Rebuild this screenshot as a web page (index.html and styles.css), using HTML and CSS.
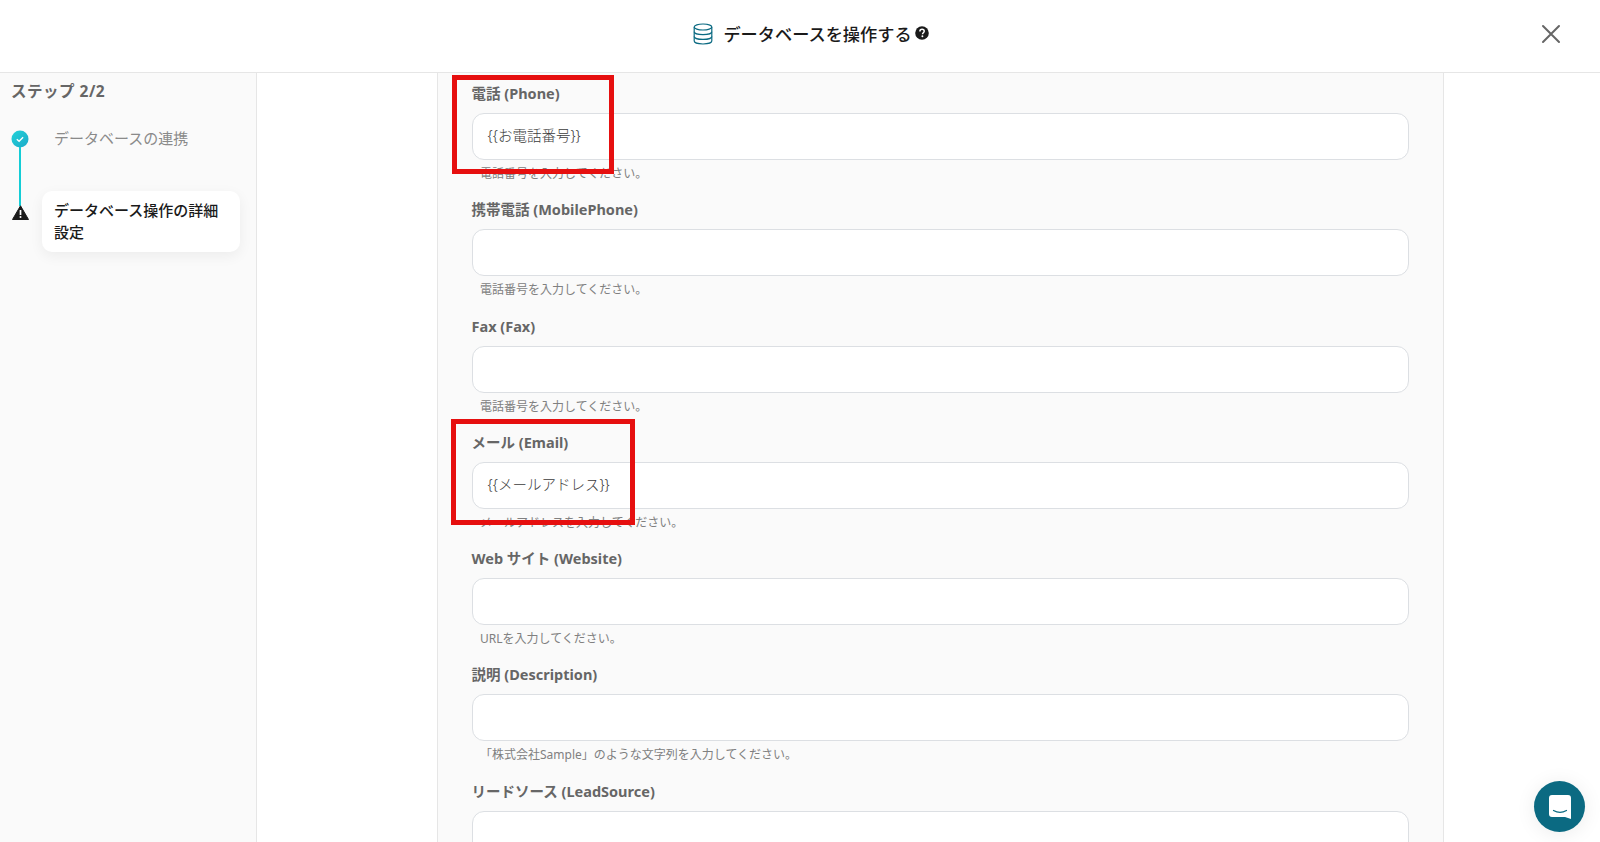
FILE: index.html
```html
<!DOCTYPE html>
<html lang="ja">
<head>
<meta charset="utf-8">
<title>データベースを操作する</title>
<link rel="stylesheet" href="styles.css">
</head>
<body>
<header class="top">
  <div class="title">
    <svg class="db" width="20" height="22" viewBox="0 0 20 22" fill="none" stroke="#0b6a82" stroke-width="1.2"><ellipse cx="10" cy="4" rx="8.8" ry="3"/><path d="M1.2 4v14c0 1.7 3.9 3 8.8 3s8.8-1.3 8.8-3V4"/><path d="M1.2 8.700c0 1.700 3.900 3 8.800 3s8.800-1.300 8.800-3"/><path d="M1.200 13.400c0 1.700 3.900 3 8.800 3s8.800-1.300 8.800-3"/></svg>
    <span class="title-text">データベースを操作する</span>
    <svg class="help" width="14" height="14" viewBox="0 0 14 14"><circle cx="7" cy="7" r="6.800" fill="#1a1a1a"/><path d="M4.900 5.400c0-1.300 1-2.100 2.200-2.100s2.100.8 2.100 1.900c0 1.600-1.700 1.500-1.700 3" fill="none" stroke="#fff" stroke-width="1.500"/><circle cx="7.400" cy="10.300" r=".95" fill="#fff"/></svg>
  </div>
  <svg class="close" width="20" height="20" viewBox="0 0 20 20" stroke="#666" stroke-width="2" stroke-linecap="round"><path d="M2 2l16 16M18 2L2 18"/></svg>
</header>
<div class="body">
  <aside class="side">
    <div class="step-title">ステップ 2/2</div>
    <div class="steps">
      <div class="rail">
        <svg width="18" height="18" viewBox="0 0 18 18"><defs><linearGradient id="g" x1="0" y1="0" x2="1" y2="1"><stop offset="0" stop-color="#22d3d8"/><stop offset="1" stop-color="#1ca9c9"/></linearGradient></defs><circle cx="9" cy="9" r="8.500" fill="url(#g)"/><path d="M5.800 9.200l2.300 2.100 4-4" fill="none" stroke="#fff" stroke-width="1.300"/></svg>
        <span class="line"></span>
        <svg width="17" height="15" viewBox="0 0 17 15"><path d="M8.500.8L16.500 14.500H.5z" fill="#1a1a1a" stroke="#1a1a1a" stroke-linejoin="round"/><path d="M8.500 5v5" stroke="#fff" stroke-width="1.700"/><circle cx="8.500" cy="12" r="1" fill="#fff"/></svg>
      </div>
      <div class="labels">
        <div class="step-done">データベースの連携</div>
        <div class="step-now">データベース操作の詳細設定</div>
      </div>
    </div>
  </aside>
  <main class="main">
    <div class="panel">
      <div class="field">
        <div class="label">電話 (Phone)</div>
        <div class="input">{{お電話番号}}</div>
        <div class="hint">電話番号を入力してください。</div>
        <span class="mark mark-phone"></span>
      </div>
      <div class="field">
        <div class="label">携帯電話 (MobilePhone)</div>
        <div class="input"></div>
        <div class="hint">電話番号を入力してください。</div>
      </div>
      <div class="field">
        <div class="label">Fax (Fax)</div>
        <div class="input"></div>
        <div class="hint">電話番号を入力してください。</div>
      </div>
      <div class="field">
        <div class="label">メール (Email)</div>
        <div class="input">{{メールアドレス}}</div>
        <div class="hint">メールアドレスを入力してください。</div>
        <span class="mark mark-mail"></span>
      </div>
      <div class="field">
        <div class="label">Web サイト (Website)</div>
        <div class="input"></div>
        <div class="hint">URLを入力してください。</div>
      </div>
      <div class="field">
        <div class="label">説明 (Description)</div>
        <div class="input"></div>
        <div class="hint">「株式会社Sample」のような文字列を入力してください。</div>
      </div>
      <div class="field">
        <div class="label">リードソース (LeadSource)</div>
        <div class="input"></div>
      </div>
    </div>
  </main>
</div>
<div class="chat">
  <svg width="24" height="26" viewBox="0 0 24 26"><path d="M4 1h16a3 3 0 0 1 3 3v21l-6-2H4a3 3 0 0 1-3-3V4a3 3 0 0 1 3-3z" fill="#fff"/><path d="M5.500 16.500c4 2.200 9 2.200 13 0" fill="none" stroke="#0b6a82" stroke-width="1.200" stroke-linecap="round"/></svg>
</div>
</body>
</html>
```

FILE: styles.css
```css
* { box-sizing: border-box; }
html, body { margin: 0; height: 100%; overflow: hidden; }
body {
  font-family: "Noto Sans", "Noto Sans CJK JP", sans-serif;
  background: #fff;
  color: #1a1a1a;
  display: flex;
  flex-direction: column;
}
.top {
  height: 73px;
  flex: none;
  border-bottom: 1px solid #e6e6e6;
  display: flex;
  align-items: center;
  justify-content: center;
  position: relative;
  background: #fff;
}
.title { display: flex; align-items: center; margin-top: -5px; margin-left: 22px; }
.db { margin-right: 10px; }
.title-text { font-size: 17.200px; font-weight: 500; color: #1a1a1a; margin-right: 3px; }
.help { margin-top: -2px; }
.close { position: absolute; left: 1541px; top: 24px; }
.body { flex: 1; display: flex; min-height: 0; }
.side {
  width: 257px;
  flex: none;
  background: #fafafa;
  border-right: 1px solid #e6e6e6;
  padding: 7px 12px 0;
}
.step-title { font-size: 15.500px; font-weight: 700; color: #666; line-height: 22px; letter-spacing: .5px; margin-left: -1px; }
.steps { display: flex; margin-top: 25px; }
.rail { width: 18px; flex: none; margin-left: -1px; display: flex; flex-direction: column; align-items: center; padding-top: 3px; }
.rail svg { flex: none; display: block; }
.line { width: 2px; height: 59px; background: #14cdd6; margin-top: -1px; }
.rail svg:last-child { margin-top: -1px; }
.labels { margin-left: 13px; }
.step-done { font-size: 15px; line-height: 22px; color: #8a8a8a; padding-left: 12px; height: 64px; }
.step-now {
  width: 198px;
  background: #fff;
  border-radius: 10px;
  box-shadow: 0 4px 14px rgba(0, 0, 0, .06);
  font-size: 15px;
  font-weight: 500;
  line-height: 22px;
  color: #1a1a1a;
  padding: 8px 12px 9px;
}
.main { flex: 1; min-width: 0; overflow: hidden; padding-left: 180px; }
.panel {
  width: 1007px;
  height: 100%;
  background: #fafafa;
  border-left: 1px solid #e6e6e6;
  border-right: 1px solid #e6e6e6;
  padding: 10px 34px 0 33.500px;
  overflow: hidden;
}
.field { position: relative; height: 116.300px; }
.label { font-size: 14.500px; font-weight: 700; color: #666; line-height: 20px; }
.input {
  height: 47px;
  margin-top: 10px;
  background: #fff;
  border: 1px solid #dcdfe3;
  border-radius: 12px;
  padding: 0 15px;
  font-size: 14.500px;
  font-weight: 300;
  line-height: 43px;
  color: #3c3c3c;
}
.hint { font-size: 12px; line-height: 18px; color: #808080; padding-left: 8.500px; margin-top: 5px; }
.mark { position: absolute; border: 5px solid #e60f0f; pointer-events: none; }
.mark-phone { left: -19.500px; top: -8px; width: 162px; height: 99px; }
.mark-mail { left: -20.500px; top: -13px; width: 184px; height: 106px; }
.chat {
  position: fixed;
  left: 1534px;
  top: 781px;
  width: 51px;
  height: 51px;
  border-radius: 50%;
  background: #0b6a82;
  box-shadow: 0 2px 20px rgba(0, 0, 0, .08);
  display: flex;
  align-items: center;
  justify-content: center;
}
```
